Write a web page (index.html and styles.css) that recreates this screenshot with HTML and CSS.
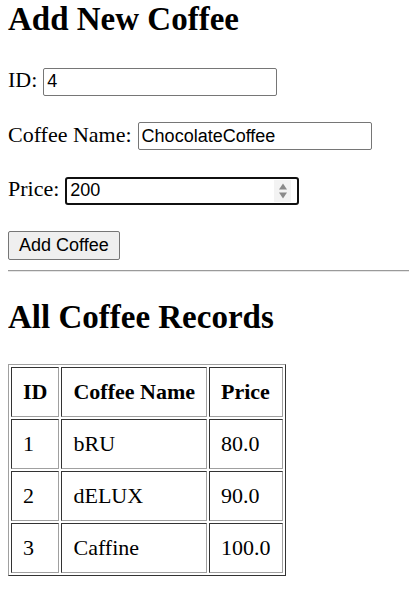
FILE: index.html
```html
<!DOCTYPE html>
<html>
<head>
<meta charset="utf-8">
<title>Coffee</title>
<link rel="stylesheet" href="styles.css">
</head>
<body>
<h1 class="title">Add New Coffee</h1>
<form class="coffee-form">
  <div class="field"><label class="label">ID:</label><input class="text-input" type="text" value="4"></div>
  <div class="field"><label class="label">Coffee Name:</label><input class="text-input" type="text" value="ChocolateCoffee"></div>
  <div class="field"><label class="label">Price:</label><span class="number-wrap"><input class="text-input number-input" type="text" value="200"><span class="spinner"><svg width="12" height="20" viewBox="0 0 12 20"><path d="M6 2.5 L10 8.5 L2 8.5 Z" fill="#8a8a8a"/><path d="M2 11.5 L10 11.5 L6 17.5 Z" fill="#8a8a8a"/></svg></span></span></div>
  <div class="field"><button class="btn" type="button">Add Coffee</button></div>
</form>
<div class="divider"></div>
<h1 class="title">All Coffee Records</h1>
<table class="records">
  <tr><th>ID</th><th>Coffee Name</th><th>Price</th></tr>
  <tr><td>1</td><td>bRU</td><td>80.0</td></tr>
  <tr><td>2</td><td>dELUX</td><td>90.0</td></tr>
  <tr><td>3</td><td>Caffine</td><td>100.0</td></tr>
</table>
</body>
</html>
```
FILE: styles.css
```css
html {
  overflow: hidden;
}
body {
  margin: 0 8px;
  font-family: "Liberation Serif", "Times New Roman", serif;
  font-size: 22px;
  color: #000;
  background: #fff;
}
.title {
  font-size: 33px;
  font-weight: bold;
  margin: 0;
  line-height: 38px;
}
.coffee-form {
  display: flex;
  flex-direction: column;
  gap: 26px;
  margin-top: 29px;
}
.field {
  display: flex;
  align-items: baseline;
  gap: 6px;
}
.label {
  line-height: 25px;
}
.text-input {
  font-family: "Liberation Sans", Arial, sans-serif;
  font-size: 18px;
  color: #000;
  width: 234px;
  height: 28px;
  box-sizing: border-box;
  border: 1px solid #767676;
  border-radius: 2px;
  padding: 0 3px;
  margin: 0;
  background: #fff;
}
.number-wrap {
  position: relative;
  display: inline-block;
}
.number-input {
  border: 2px solid #101010;
  border-radius: 3px;
  padding-left: 3px;
  outline: none;
}
.spinner {
  position: absolute;
  right: 8px;
  top: 4px;
  width: 17px;
  height: 22px;
  background: #f3f3f3;
  display: flex;
  align-items: center;
  justify-content: center;
}
.btn {
  font-family: "Liberation Sans", Arial, sans-serif;
  font-size: 18px;
  color: #000;
  height: 29px;
  padding: 0 10px;
  border: 1px solid #767676;
  border-radius: 2px;
  background: #efefef;
}
.divider {
  border-top: 1px solid #9a9a9a;
  border-bottom: 1px solid #e6e6e6;
  height: 0;
  width: calc(100vw - 8px);
  margin: 10px 0 26px 0;
}
.records {
  margin-top: 28px;
  border-style: solid;
  border-width: 1px;
  border-color: #a0a0a0 #333 #333 #a0a0a0;
  border-spacing: 2px;
}
.records th, .records td {
  border-style: solid;
  border-width: 1px;
  border-color: #333 #a0a0a0 #a0a0a0 #333;
  padding: 12px 11px;
  line-height: 24px;
  text-align: left;
}
.records th {
  font-weight: bold;
}
```
